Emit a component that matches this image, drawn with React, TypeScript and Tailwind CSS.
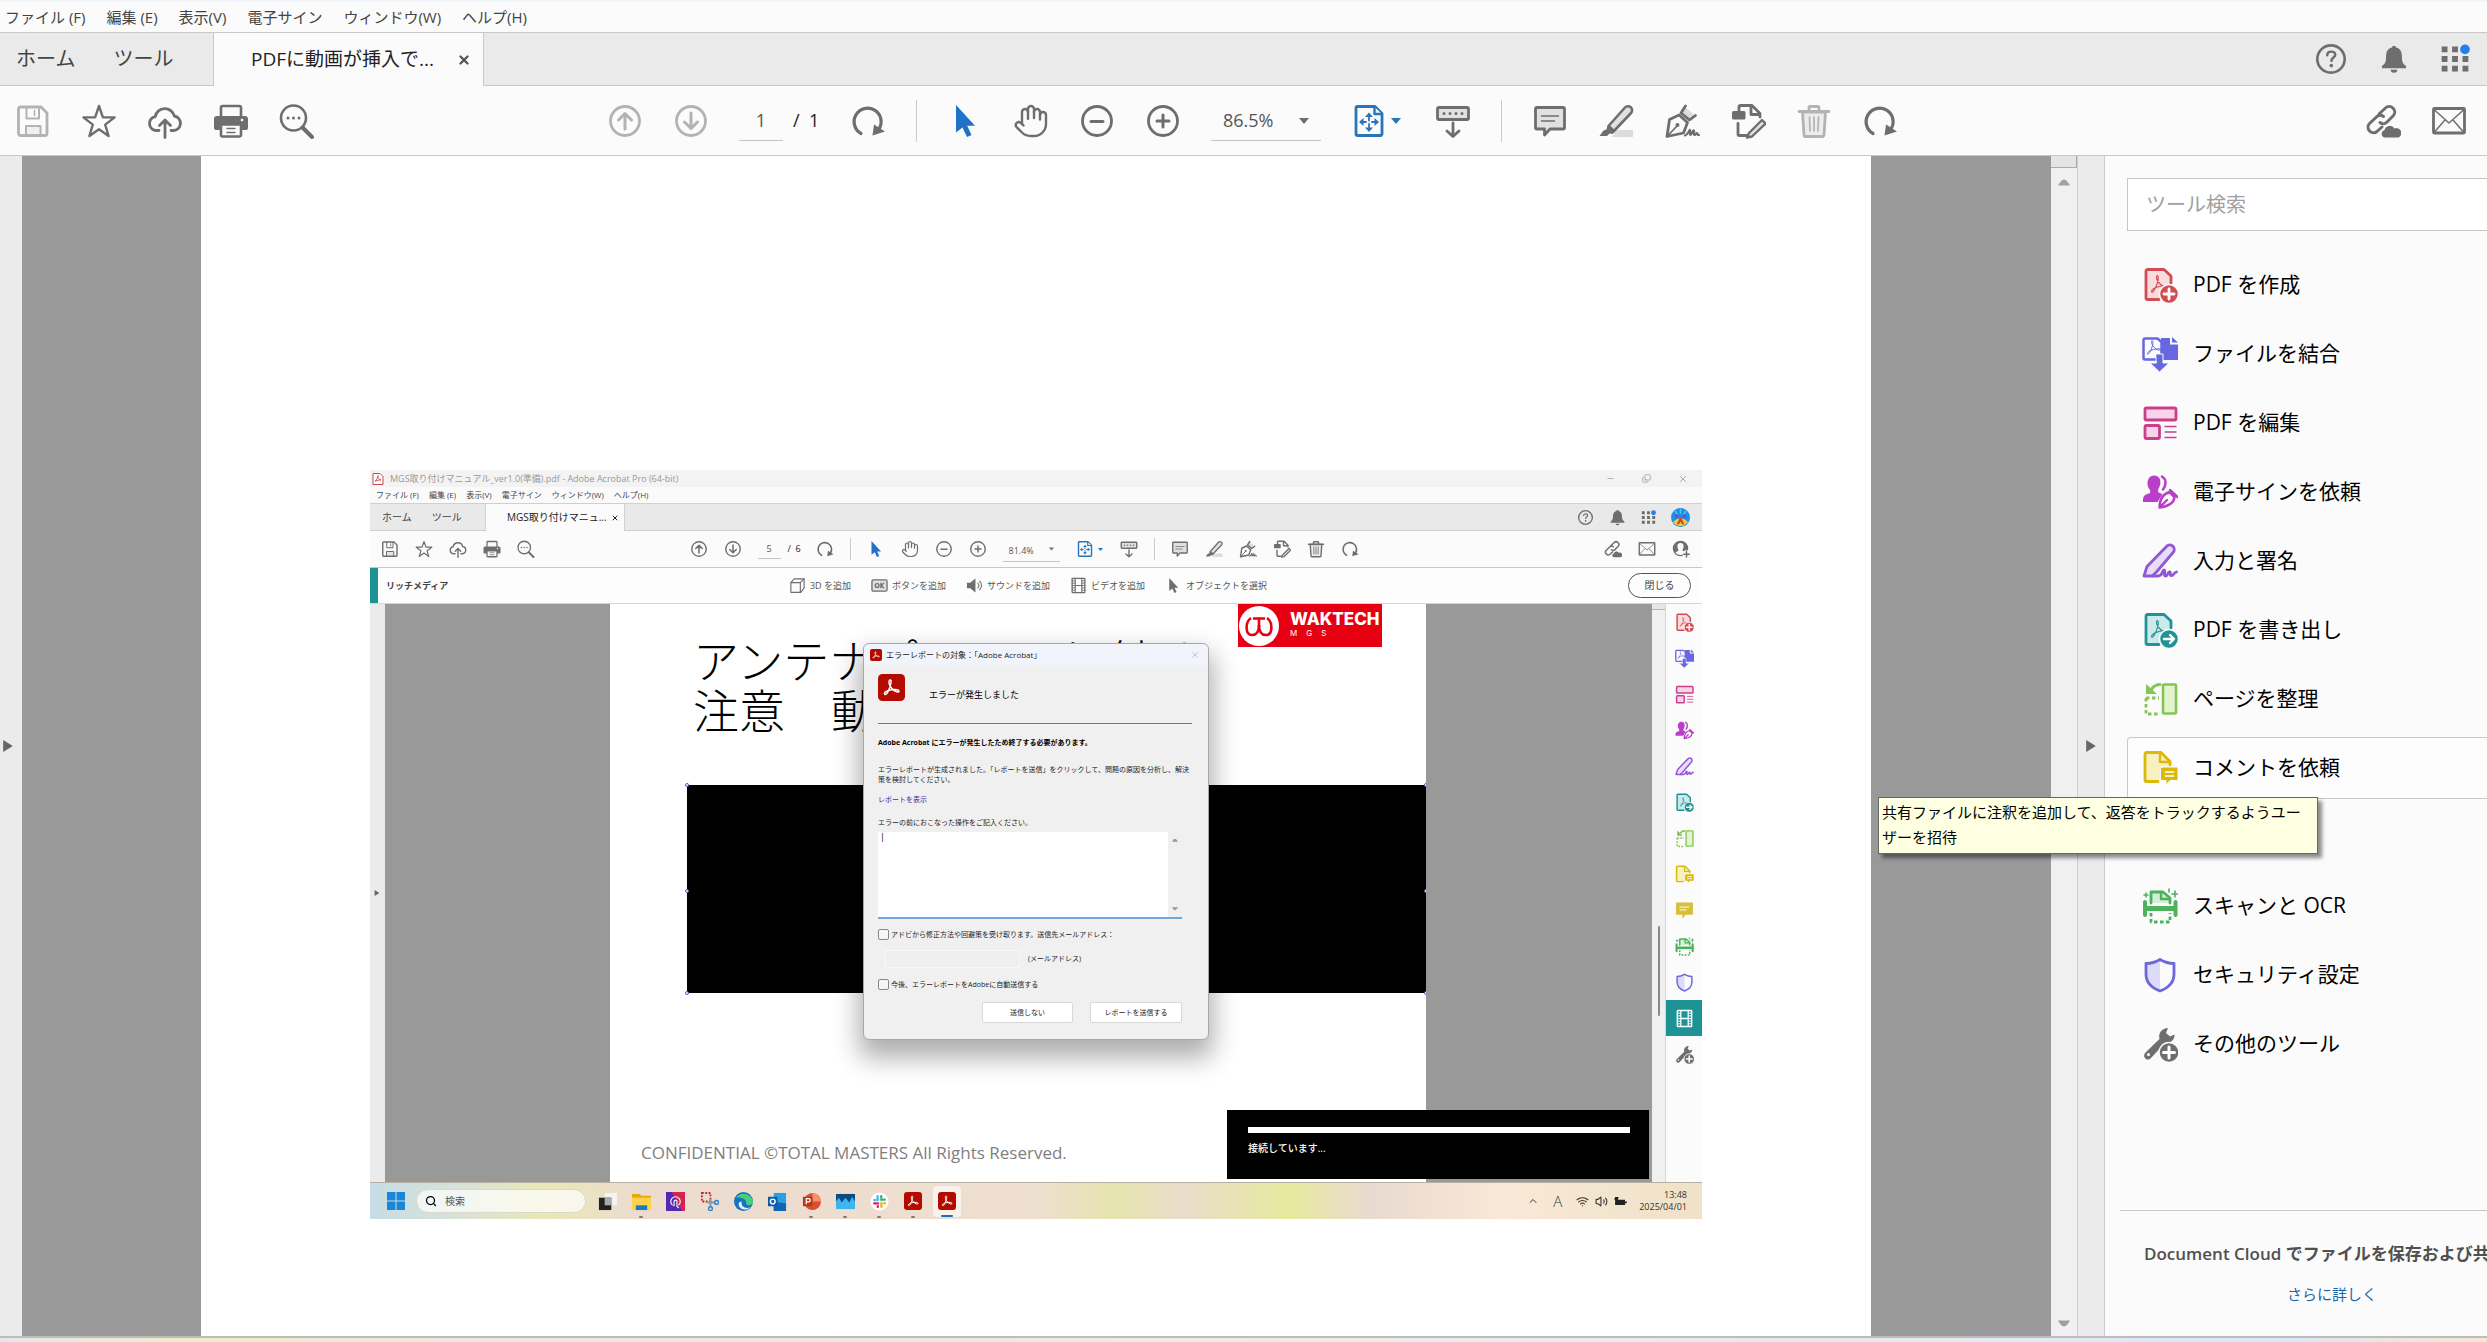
import React, { FC, ReactNode } from 'react';
import { Hand, Wifi, Volume2, ChevronUp, X, Minus, Copy, Search } from 'lucide-react';

const acrobatMark = (
  <path
    d="M12 28c-3 1-5 4-4 5s4-3 6-9 2-9 1-10-2 1-1 4 5 8 9 9 5 0 4-1-6-1-15 2z"
    strokeWidth="1.4"
  />
);

const redoShape = (
  <>
    <path d="M11 30.5A13.5 13.5 0 1 1 29 26" strokeWidth="3.2" />
    <path d="M22.500 32.500L24 21.500L35 28.500Z" fill="currentColor" stroke="none" />
  </>
);

const icons: Record<string, ReactNode> = {
  save: (
    <>
      <path d="M5.500 4H26l6 6v20.500a2 2 0 0 1-2 2H5.500a2 2 0 0 1-2-2V6a2 2 0 0 1 2-2z" />
      <path d="M11.500 4.500V15.500H24V5" strokeWidth="2" />
      <path d="M19.500 7.500v5" strokeWidth="1.600" />
      <path d="M11 32v-9h14.500v9" fill="currentColor" fillOpacity=".15" strokeWidth="2" />
    </>
  ),
  star: <path d="M18 3l3.800 11.200 11.800.2-9.400 7.200 3.400 11.400-9.600-6.800-9.600 6.800 3.400-11.400-9.400-7.200 11.800-.2z" strokeWidth="2.400" />,
  cloudUp: (
    <>
      <path d="M12 27.500H9.500a7 7 0 0 1-1.200-13.900 9.700 9.700 0 0 1 19-.6 7.300 7.300 0 0 1-.8 14.500H24" strokeWidth="2.800" />
      <path d="M18 34.500V18M12.500 22.500l5.500-5.500 5.500 5.500" strokeWidth="2.800" />
    </>
  ),
  print: (
    <>
      <path d="M8 13V4.500A1.500 1.500 0 0 1 9.500 3h17A1.500 1.500 0 0 1 28 4.500V13" strokeWidth="2.600" />
      <path d="M4 13h28a3 3 0 0 1 3 3v9a2 2 0 0 1-2 2H3a2 2 0 0 1-2-2v-9a3 3 0 0 1 3-3z" fill="currentColor" stroke="none" />
      <path d="M8 21.500h20V32a1.500 1.500 0 0 1-1.500 1.500h-17A1.500 1.500 0 0 1 8 32z" fill="#fbfbfb" strokeWidth="2.600" />
      <path d="M14 25.500h8M14 29.500h8" strokeWidth="1.400" />
      <circle cx="29" cy="17" r="1.300" fill="#fff" stroke="none" />
    </>
  ),
  find: (
    <>
      <circle cx="14.500" cy="15" r="12.500" strokeWidth="2.600" />
      <path d="M23.500 24.500l9.500 9.500" strokeWidth="4" />
      <path d="M9 15h.01M14.500 15h.01M20 15h.01" strokeWidth="3" />
    </>
  ),
  up: (
    <>
      <circle cx="18" cy="18" r="14.500" />
      <path d="M18 26V11.500M11.500 17L18 10.500l6.500 6.500" strokeWidth="3" />
    </>
  ),
  down: (
    <>
      <circle cx="18" cy="18" r="14.500" />
      <path d="M18 10v14.500M11.500 19l6.500 6.500 6.500-6.500" strokeWidth="3" />
    </>
  ),
  redo: redoShape,
  cursor: <path d="M9 2v27.500l6.500-5L20 34l4.500-2-4.300-9.200H28z" fill="currentColor" stroke="none" />,
  minus: (
    <>
      <circle cx="18" cy="18" r="14.500" />
      <path d="M12 18.500h12" strokeWidth="3" />
    </>
  ),
  plus: (
    <>
      <circle cx="18" cy="18" r="14.500" />
      <path d="M12 18h12M18 12v12" strokeWidth="3" />
    </>
  ),
  fit: (
    <>
      <path d="M6.500 3.500H24l7 7V31a1.500 1.500 0 0 1-1.500 1.500h-23A1.500 1.500 0 0 1 5 31V5a1.500 1.500 0 0 1 1.500-1.500z" />
      <path d="M23.500 4v7H31" fill="#fbfbfb" strokeWidth="2.400" />
      <path d="M18 14v3.500M18 21v3.500M11 19h4M21 19h4" strokeWidth="1.800" />
      <path d="M18 9.500l4 4.500h-8zM18 29l4-4.500h-8zM8 19l4.500-4v8zM28 19l-4.500-4v8z" fill="currentColor" stroke="none" />
    </>
  ),
  keyboard: (
    <>
      <rect x="2.500" y="4.500" width="31" height="12" rx="1.500" fill="#e1e1e1" />
      <path d="M9 10.500h.01M15 10.500h.01M21 10.500h.01M27 10.500h.01" strokeWidth="3" />
      <path d="M18 20v13M12 28l6 5.500 6-5.500" />
    </>
  ),
  comment: (
    <>
      <path d="M5 4.500h26A1.500 1.500 0 0 1 32.500 6v18.500A1.500 1.500 0 0 1 31 26H18l-5.500 6v-6H5a1.500 1.500 0 0 1-1.500-1.500V6A1.500 1.500 0 0 1 5 4.500z" fill="#e1e1e1" />
      <path d="M9.500 13h17M9.500 18h13" strokeWidth="1.500" />
    </>
  ),
  marker: (
    <>
      <path d="M14 34l5-7h16v7z" fill="#dcdcdc" stroke="none" />
      <path d="M10.500 23L27 4.500a3.500 3.500 0 0 1 6 5.500L16 28z" fill="#e1e1e1" strokeWidth="2.600" />
      <path d="M9.500 22.500l8 6-3 2.500-3-.5-2.500 2.500H1.500l4-5.500 3-1z" fill="currentColor" stroke="none" />
    </>
  ),
  sign: (
    <>
      <path d="M15 12l8.500 7.500-4 10.500L3 33.500l2.500-17z" />
      <path d="M4 32.500l8.500-9" strokeWidth="1.800" />
      <circle cx="13.500" cy="22" r="2" fill="currentColor" stroke="none" />
      <path d="M21 4l9.500 8-4.500 5-8.500-7z" fill="#dcdcdc" stroke="none" />
      <path d="M21.500 3l-4.500 7 8.500 7 6-4.500" />
      <path d="M21 32.500c3-1 3.500-4.500 5-5.500 1 1-1 5 .5 5s1.500-4 3-4.500-.5 4.500 1 4.500 1.500-2 2.500-2 0 2.500 2 2" strokeWidth="2.200" />
    </>
  ),
  edit: (
    <>
      <path d="M9 8V4a1.500 1.500 0 0 1 1.500-1.500H22l8 8V14M21 3v8.500h9" />
      <rect x="2" y="8" width="13.500" height="8.500" rx="1.500" fill="currentColor" stroke="none" />
      <path d="M8 20.500v10.500a1.500 1.500 0 0 0 1.500 1.500H16" />
      <path d="M19 30L32 17l3.500 3.500-13.500 13-5 1z" fill="#e1e1e1" strokeWidth="2.400" />
    </>
  ),
  trash: (
    <>
      <path d="M3 8.500h30M13 8V5a1.500 1.500 0 0 1 1.500-1.500h7A1.500 1.500 0 0 1 23 5v3" />
      <path d="M6.500 9l1.500 23a1.500 1.500 0 0 0 1.500 1.500h17A1.500 1.500 0 0 0 28 32l1.500-23z" fill="#ececec" />
      <path d="M13.500 14l.5 14M18 14v14M22.500 14l-.5 14" strokeWidth="1.700" />
    </>
  ),
  link: (
    <>
      <path d="M14 11l6.500-6a5.500 5.500 0 0 1 8 7.500L22 19a5 5 0 0 1-7 .5" strokeWidth="3" />
      <path d="M18.500 13.500a5 5 0 0 0-6.500 0l-7.500 7a5.500 5.500 0 0 0 7.500 8l5-4.500" strokeWidth="3" />
      <path d="M19 34.500a4 4 0 0 1 .5-7.500 5.500 5.500 0 0 1 10-1.500 4.700 4.700 0 0 1 4 9z" fill="currentColor" stroke="none" />
    </>
  ),
  mail: (
    <>
      <rect x="2.500" y="5.500" width="31" height="24.500" rx="1" />
      <path d="M3.500 7L18 20 32.500 7M3.500 29l10-11.500M32.500 29l-10-11.500" strokeWidth="1.500" />
    </>
  ),
  help: (
    <>
      <circle cx="18" cy="18" r="14.500" />
      <path d="M14 14c0-5 8.500-5 8.500-.5 0 3-4 3-4 6.500" strokeWidth="2.600" />
      <circle cx="18.300" cy="25" r="1.900" fill="currentColor" stroke="none" />
    </>
  ),
  bell: (
    <path
      d="M18 2a2.500 2.500 0 0 1 2.500 2.200C26 5.500 27.500 10 27.500 15c0 7 1.500 9 5 11.500V29h-29v-2.500c3.500-2.500 5-4.500 5-11.500 0-5 1.500-9.500 7-10.800A2.500 2.500 0 0 1 18 2zM14 31h8a4 3.500 0 0 1-8 0z"
      fill="currentColor"
      stroke="none"
    />
  ),
  apps: (
    <>
      <path
        d="M2 3h7v7H2zM14.500 3h7v7h-7zM2 14.500h7v7H2zM14.500 14.500h7v7h-7zM27 14.500h7v7h-7zM2 26h7v7H2zM14.500 26h7v7h-7zM27 26h7v7h-7z"
        fill="currentColor"
        stroke="none"
      />
      <circle cx="30" cy="6.500" r="5.800" fill="#2680eb" stroke="none" />
    </>
  ),
  userAdd: (
    <>
      <circle cx="17" cy="17" r="15.500" fill="currentColor" stroke="none" />
      <path d="M17 6c5 0 7 4 6 8.500-.5 3-2 4.500-2 6.500 1 2 5 2 6 4-3 3.500-6 5-10 5s-7-1.500-10-5c1-2 5-2 6-4 0-2-1.500-3.500-2-6.500C10 10 12 6 17 6z" fill="#fbfbfb" stroke="none" />
      <circle cx="29" cy="28" r="7.500" fill="#fbfbfb" stroke="none" />
      <path d="M23.500 28.500h11M29 23v11" strokeWidth="3" />
    </>
  ),
  cube: (
    <>
      <path d="M4 12l7-8h21v19l-7 9.500H4z" strokeWidth="2.400" />
      <path d="M4 12h20v20M24 12l8-8" strokeWidth="2.400" />
    </>
  ),
  ok: (
    <>
      <rect x="2" y="6" width="32" height="24" rx="3" fill="#e1e1e1" />
      <circle cx="13" cy="18" r="4" />
      <path d="M21 13v10M27 13l-5 5 5 5" />
    </>
  ),
  sound: (
    <>
      <path d="M2 12h7l11-9v30L9 24H2z" fill="currentColor" stroke="none" />
      <path d="M25 13c3 2 3 8 0 10M29 9c5 4 5 14 0 18" strokeWidth="2.200" />
    </>
  ),
  film: (
    <>
      <rect x="4.500" y="3" width="27" height="30" rx="1" />
      <path d="M11 3v30M25 3v30M11 18h14" strokeWidth="2.400" />
      <path d="M5 8h5M5 13h5M5 18h5M5 23h5M5 28h5M26 8h5M26 13h5M26 18h5M26 23h5M26 28h5" strokeWidth="1.800" />
    </>
  ),
  createPdf: (
    <>
      <path d="M17 32.500H5.500A1.500 1.500 0 0 1 4 31V4a1.500 1.500 0 0 1 1.500-1.500H22l7 6.500v7" fill="#fadcdc" />
      <g transform="translate(3 -3) scale(.85)">{acrobatMark}</g>
      <circle cx="27" cy="27" r="9.500" fill="currentColor" stroke="#fbfbfb" strokeWidth="1.500" />
      <path d="M22 27h10M27 22v10" stroke="#fff" />
    </>
  ),
  combine: (
    <>
      <path d="M19 2h9v6.500h8V24H19z" fill="currentColor" stroke="none" />
      <path d="M30 1l6 5.500h-6z" fill="currentColor" stroke="none" />
      <path d="M3 2.500h12.500l4 3.500v17.500H3A1.500 1.500 0 0 1 1.500 22V4A1.500 1.500 0 0 1 3 2.500z" fill="#fbfbfb" strokeWidth="2.500" />
      <g transform="translate(0 -5) scale(.7)">{acrobatMark}</g>
      <path d="M14 18h7v9h6l-9.500 9L8 27h6z" fill="currentColor" stroke="#fbfbfb" strokeWidth="1" />
    </>
  ),
  editPdf: (
    <>
      <rect x="3" y="3" width="31" height="12" rx="1.500" fill="#f8d4e8" />
      <rect x="3" y="20.500" width="14.500" height="13" rx="1.500" fill="#f8d4e8" />
      <path d="M22.500 21.500h12M22.500 27h12M22.500 32.500h12" strokeWidth="1.600" strokeLinecap="butt" />
    </>
  ),
  requestSign: (
    <>
      <path d="M12 1.500c5 0 7 4 6.300 8.500-.4 3-2.300 4.500-2.300 7 0 2 3 2 4.500 3l-5 8H1c0-6 1-7 6-8.500 2-.7 1.500-3 .3-4.500C4 11 5 1.500 12 1.500z" fill="currentColor" stroke="none" />
      <path d="M20 2.500c5 3 4 9 1 13" strokeWidth="2.600" />
      <path d="M17.500 33.500c0-7 2-13 10-15.500l5 5.500c-1 6.500-7 9-15 10zM18 33l7-7M28 16l7.500 7" strokeWidth="2.400" />
    </>
  ),
  fillSign: (
    <>
      <path d="M2 33l3-9.500L24 4a4 4 0 0 1 7.500 5L14 29.500 10 33z" fill="#e9dcfb" />
      <path d="M10 33h6c5 0 4-6 6-6s-1 6 1.500 6 2-4 4-4-.5 3.500 2 3.500 1.500-2.500 5-3.500" strokeWidth="2.800" />
    </>
  ),
  exportPdf: (
    <>
      <path d="M17 32.500H5.500A1.500 1.500 0 0 1 4 31V4a1.500 1.500 0 0 1 1.500-1.500H22l7 6.500v7" fill="#cdeaea" />
      <g transform="translate(3 -3) scale(.85)">{acrobatMark}</g>
      <circle cx="27" cy="27" r="9.500" fill="currentColor" stroke="#fbfbfb" strokeWidth="1.500" />
      <path d="M22 27h9M28 23l4 4-4 4" stroke="#fff" strokeWidth="2.400" />
    </>
  ),
  organize: (
    <>
      <rect x="21" y="3.500" width="13" height="29" rx="1" fill="#e2f3cf" strokeWidth="2.600" />
      <path d="M4 17h13M4 17v16h13" strokeDasharray="3.500 2.500" strokeLinecap="butt" />
      <path d="M18 3.500c-4 0-6 1.500-8 4" strokeWidth="3" />
      <path d="M4 3v10h11z" fill="currentColor" stroke="none" />
    </>
  ),
  requestComment: (
    <>
      <path d="M16 31.500H4.500A1.500 1.500 0 0 1 3 30V4a1.500 1.500 0 0 1 1.500-1.500H19l9 9V15" fill="#f9f0c0" />
      <path d="M18 3v9h10" strokeWidth="2.400" />
      <path d="M20 17h14.500A1.500 1.500 0 0 1 36 18.500v10.500a1.500 1.500 0 0 1-1.500 1.500H28l-4 4.500v-4.500h-4a1.500 1.500 0 0 1-1.500-1.500V18.500A1.500 1.500 0 0 1 20 17z" fill="currentColor" stroke="#fbfbfb" strokeWidth="1" />
      <path d="M23.500 22h8M23.500 26h8" stroke="#fff" strokeWidth="1.600" />
    </>
  ),
  note: (
    <>
      <path d="M3.500 3h29A1.500 1.500 0 0 1 34 4.500v20a1.500 1.500 0 0 1-1.500 1.500H20l-6 7.500V26H3.500A1.500 1.500 0 0 1 2 24.500v-20A1.500 1.500 0 0 1 3.500 3z" fill="currentColor" stroke="none" />
      <path d="M9 11.500h17M9 17h12" stroke="#fff" strokeWidth="1.800" />
    </>
  ),
  scan: (
    <>
      <path d="M9 15V4h12l7 6v5" fill="#d3efd7" />
      <path d="M19 4v7h8" strokeWidth="2.400" />
      <path d="M3 14v13M33.500 14v13" strokeWidth="4" />
      <path d="M2 18h33v5H2z" fill="currentColor" stroke="none" />
      <path d="M9 25v9h19v-9" strokeDasharray="3.500 2.500" strokeLinecap="butt" />
      <path d="M33 3v6M30 6h6M4 5v4M2 7h4M27 1v3" strokeWidth="1.600" />
    </>
  ),
  shield: (
    <>
      <path d="M18 3v31C8 29 4 24 4 17V7c6 0 9-1 14-4z" fill="#dddafa" stroke="none" />
      <path d="M18 2.500c5 3 8.500 4 14 4V17c0 8-4.500 13.500-14 17C8.500 30.500 4 25 4 17V6.500c5.500 0 9-1 14-4z" />
    </>
  ),
  wrench: (
    <>
      <path d="M17.500 13c-1.500-6 2.500-11 8.500-11l-2 5 4 3.500 4.500-2c.5 5.500-5 9.500-9.500 8.500L9 32c-3.500 4-9-.5-6-5z" fill="currentColor" stroke="none" />
      <circle cx="6.500" cy="28.500" r="1.500" fill="#fff" stroke="none" />
      <circle cx="27" cy="26.500" r="10" fill="currentColor" stroke="#fbfbfb" strokeWidth="1.500" />
      <path d="M21.500 26.500h11M27 21v11" stroke="#fff" strokeWidth="3" />
    </>
  ),
};

type IconProps = { name: string; className?: string };

const Icon: FC<IconProps> = ({ name, className = 'size-9' }) => (
  <svg
    viewBox="0 0 36 36"
    className={`shrink-0 ${className}`}
    fill="none"
    stroke="currentColor"
    strokeWidth="2.8"
    strokeLinejoin="round"
    strokeLinecap="round"
    aria-hidden="true"
  >
    {icons[name]}
  </svg>
);

const Caret: FC<{ className?: string; d?: string }> = ({ className = '', d = 'M0 2h10L5 8z' }) => (
  <svg viewBox="0 0 10 10" className={`shrink-0 ${className}`} fill="currentColor" aria-hidden="true">
    <path d={d} />
  </svg>
);

const UP = 'M0 8h10C9 6 6.500 3 5 3S1 6 0 8z';
const DOWN = 'M0 2h10C9 4 6.500 7 5 7S1 4 0 2z';
const RIGHT = 'M1 0l8 5-8 5z';

const menuItems = ['ファイル (F)', '編集 (E)', '表示(V)', '電子サイン', 'ウィンドウ(W)', 'ヘルプ(H)'];

const tools = [
  { icon: 'createPdf', label: 'PDF を作成', color: 'text-[#d34b53]' },
  { icon: 'combine', label: 'ファイルを結合', color: 'text-[#6767e4]' },
  { icon: 'editPdf', label: 'PDF を編集', color: 'text-[#cb3e8c]' },
  { icon: 'requestSign', label: '電子サインを依頼', color: 'text-[#b93fc9]' },
  { icon: 'fillSign', label: '入力と署名', color: 'text-[#9158d4]' },
  { icon: 'exportPdf', label: 'PDF を書き出し', color: 'text-[#219296]' },
  { icon: 'organize', label: 'ページを整理', color: 'text-[#86c552]' },
  { icon: 'requestComment', label: 'コメントを依頼', color: 'text-[#dbb90c]' },
  { icon: '', label: '', color: '' },
  { icon: 'scan', label: 'スキャンと OCR', color: 'text-[#4cb25e]' },
  { icon: 'shield', label: 'セキュリティ設定', color: 'text-[#6b68dc]' },
  { icon: 'wrench', label: 'その他のツール', color: 'text-[#6e6e6e]' },
];

const railIcons = [
  ...tools.slice(0, 8),
  { icon: 'note', label: '注釈', color: 'text-[#d8be3a]' },
  ...tools.slice(9, 11),
  { icon: 'film', label: 'リッチメディア', color: 'text-white' },
  tools[11],
];

const sizes = {
  large: {
    bar: 'h-[70px]',
    slot: 'w-[66px]',
    icon: 'size-9',
    left: '',
    middle: 'pl-[18px]',
    right: 'pr-[5px]',
    dim: 'text-[#b3b3b3]',
    nav: 'text-[#b3b3b3]',
    input: 'ml-[15px] w-11 h-[41px] text-[18px]',
    total: 'w-[52px] pl-[10px] text-[18px]',
    divider: 'mx-[15px] h-[42px]',
    select: 'ml-[15px] w-[110px]',
    selectText: 'h-[41px] pl-3 text-[18px]',
    selectCaret: 'right-3 size-[10px]',
    fit: 'w-[99px] pl-[30px] gap-1',
    caret: 'size-[10px]',
  },
  small: {
    bar: 'h-[37px]',
    slot: 'w-[34px]',
    icon: 'size-[18px]',
    left: 'pl-[3px]',
    middle: 'pr-6',
    right: 'pr-1',
    dim: 'text-[#6e6e6e]',
    nav: 'text-[#6e6e6e]',
    input: 'ml-2 w-[23px] h-5 text-[9px]',
    total: 'w-[27px] pl-[7px] text-[9px]',
    divider: 'mx-2 h-[22px]',
    select: 'ml-2 w-[57px]',
    selectText: 'h-5 pl-[6px] text-[9px]',
    selectCaret: 'right-[6px] size-[5px]',
    fit: 'w-[52px] pl-4 gap-1',
    caret: 'size-[5px]',
  },
};

type ToolbarProps = {
  size: 'large' | 'small';
  page: string;
  pages: string;
  zoom: string;
};

const Toolbar: FC<ToolbarProps> = ({ size, page, pages, zoom }) => {
  const s = sizes[size];
  const tool = (name: string, color = '') => (
    <button key={name} type="button" aria-label={name} className={`flex justify-center ${s.slot} ${color}`}>
      {name === 'hand' ? <Hand className={s.icon} strokeWidth={1.6} /> : <Icon name={name} className={s.icon} />}
    </button>
  );

  return (
    <div className={`grid grid-cols-[1fr_auto_1fr] items-center border-b border-[#c8c8c8] bg-[#fbfbfb] text-[#6e6e6e] ${s.bar}`}>
      <div className={`flex ${s.left}`}>
        {tool('save', s.dim)}
        {['star', 'cloudUp', 'print', 'find'].map((name) => tool(name))}
      </div>
      <div className={`flex items-center ${s.middle}`}>
        {tool('up', s.nav)}
        {tool('down', s.nav)}
        <input
          type="text"
          aria-label="page"
          defaultValue={page}
          className={`border-b border-[#c4c4c4] bg-transparent text-center text-[#555] outline-none ${s.input}`}
        />
        <span className={`whitespace-pre text-[#222] ${s.total}`}>{`/  ${pages}`}</span>
        {tool('redo')}
        <div className={`w-px bg-[#cacaca] ${s.divider}`} />
        {tool('cursor', 'text-[#1f72c6]')}
        {tool('hand')}
        {tool('minus')}
        {tool('plus')}
        <div className={`relative ${s.select}`}>
          <select
            aria-label="zoom"
            className={`w-full appearance-none border-b border-[#c4c4c4] bg-transparent text-[#555] outline-none ${s.selectText}`}
          >
            <option>{zoom}</option>
          </select>
          <Caret className={`pointer-events-none absolute top-1/2 -translate-y-1/2 ${s.selectCaret}`} />
        </div>
        <button type="button" aria-label="fit" className={`flex items-center text-[#2a74ba] ${s.fit}`}>
          <Icon name="fit" className={s.icon} />
          <Caret className={s.caret} />
        </button>
        {tool('keyboard')}
        <div className={`w-px bg-[#cacaca] ${s.divider}`} />
        {['comment', 'marker', 'sign', 'edit'].map((name) => tool(name))}
        {tool('trash', s.dim)}
        {tool('redo')}
      </div>
      <div className={`flex justify-end ${s.right}`}>
        {tool('link')}
        {tool('mail')}
        {size === 'small' && tool('userAdd')}
      </div>
    </div>
  );
};

const AcrobatLogo: FC<{ className?: string }> = ({ className = '' }) => (
  <svg viewBox="0 0 36 36" className={`shrink-0 ${className}`} fill="none" aria-hidden="true">
    <rect width="36" height="36" rx="6" fill="#b30b00" />
    <path
      d="M9 27c-2-2 3-5 9-6s10 0 10 2-5 1-9-3-5-9-4-11 3-1 2.500 2S13 29 9 27z"
      stroke="#fff"
      strokeWidth="2"
    />
  </svg>
);

const ErrorDialog = () => (
  <div
    role="dialog"
    aria-label="エラーレポート"
    className="absolute left-[493px] top-[173px] h-[397px] w-[346px] rounded-md border border-[#a8a8a8] bg-[#f0f0f0] text-[7px] leading-[10px] text-[#222] shadow-[0_14px_26px_4px_rgba(0,0,0,0.32)]"
  >
    <div className="flex h-[21px] items-center gap-1 rounded-t-md bg-[#f2f4fc] pl-[6px] pr-2 text-[8px]">
      <AcrobatLogo className="size-3" />
      <span className="flex-1">エラーレポートの対象：「Adobe Acrobat」</span>
      <X className="size-[10px] text-[#bbb]" strokeWidth={2} />
    </div>
    <div className="pl-[14px] pr-4">
      <div className="mt-[9px] flex gap-6 text-[9px]">
        <AcrobatLogo className="size-[27px]" />
        <span className="pt-4 text-black">エラーが発生しました</span>
      </div>
      <hr className="mt-[22px] border-[#777]" />
      <p className="mt-[14px] font-bold text-black">Adobe Acrobat にエラーが発生したため終了する必要があります。</p>
      <p className="mt-[17px] whitespace-nowrap">
        エラーレポートが生成されました。「レポートを送信」をクリックして、問題の原因を分析し、解決
        <br />
        策を検討してください。
      </p>
      <a href="#report" className="mt-[10px] block text-[#33309a]">
        レポートを表示
      </a>
      <label htmlFor="steps" className="mt-[13px] block">
        エラーの前におこなった操作をご記入ください。
      </label>
      <div className="mt-1 flex h-[87px] w-[304px] border-b-2 border-[#6fa8d6] bg-white">
        <textarea id="steps" defaultValue="|" className="flex-1 resize-none bg-transparent px-[2px] text-[9px] text-black outline-none" />
        <div className="flex w-[14px] flex-col items-center justify-between bg-[#f0f0f0] py-[5px] text-[#999]">
          <Caret className="size-[6px]" d={UP} />
          <Caret className="size-[6px]" d={DOWN} />
        </div>
      </div>
      <label className="mt-[10px] flex items-center gap-[2px] whitespace-nowrap">
        <input type="checkbox" className="size-[11px] appearance-none rounded-xs border border-[#888] bg-[#f6f6f6]" />
        アドビから修正方法や回避策を受け取ります。送信先メールアドレス：
      </label>
      <label className="mt-[10px] flex items-center gap-2 pl-[7px]">
        <input type="text" className="h-[18px] w-[135px] border border-[#f8f8f8] bg-[#efefef] outline-none" />
        (メールアドレス)
      </label>
      <label className="mt-[11px] flex items-center gap-[2px]">
        <input type="checkbox" className="size-[11px] appearance-none rounded-xs border border-[#888] bg-[#f6f6f6]" />
        今後、エラーレポートをAdobeに自動送信する
      </label>
      <div className="mt-3 flex justify-end gap-[17px] pr-[10px]">
        <button type="button" className="h-[21px] w-[91px] rounded-xs border border-[#d8d8d8] bg-white">
          送信しない
        </button>
        <button type="button" className="h-[21px] w-[92px] rounded-xs border border-[#d8d8d8] bg-white">
          レポートを送信する
        </button>
      </div>
    </div>
  </div>
);

const richMediaTools = [
  { icon: 'cube', label: '3D を追加' },
  { icon: 'ok', label: 'ボタンを追加' },
  { icon: 'sound', label: 'サウンドを追加' },
  { icon: 'film', label: 'ビデオを追加' },
  { icon: 'cursor', label: 'オブジェクトを選択' },
];

const handles = [
  '-left-[2px] -top-[2px]',
  '-right-[2px] -top-[2px]',
  '-left-[2px] top-1/2',
  '-right-[2px] top-1/2',
  '-bottom-[2px] -left-[2px]',
  '-bottom-[2px] -right-[2px]',
];

const Slide = () => (
  <div className="relative min-w-0 flex-1 overflow-hidden bg-white">
    <div className="absolute right-11 top-0 flex h-[43px] w-36 items-center bg-[#e60012] text-white">
      <svg viewBox="0 0 40 40" className="ml-px size-10 shrink-0" fill="none" stroke="#e60012" strokeWidth="2.6">
        <circle cx="20" cy="20" r="20" fill="#fff" stroke="none" />
        <path d="M12 12c-6 4-6 17 1 17 5 0 7-4 7-10 0 6 2 10 7 10 7 0 7-13 1-17" />
        <path d="M14 12.500h12M20 13v8" />
      </svg>
      <div className="ml-[11px] font-[Inter] leading-[14px]">
        <div className="text-[17px] font-extrabold">WAKTECH</div>
        <div className="whitespace-pre text-[8px]">M    G    S</div>
      </div>
    </div>
    <h2 className="pl-[83px] pt-[31px] text-[46px] font-light leading-[50px] text-black">
      アンテナポール取り付け
      <br />
      注意　動画
    </h2>
    <div className="relative ml-[77px] mt-[50px] h-52 bg-black">
      {handles.map((position) => (
        <span key={position} className={`absolute size-1 rounded-full border border-[#5a55b8] bg-white ${position}`} />
      ))}
    </div>
    <p className="mt-[148px] pl-[31px] text-[17px] leading-6 text-[#808080]">
      CONFIDENTIAL ©TOTAL MASTERS All Rights Reserved.
    </p>
  </div>
);

const taskbarApps: { id: string; state?: 'open' | 'active'; art: ReactNode }[] = [
  {
    id: 'taskview',
    art: (
      <>
        <path d="M7 1h13v13H7z" fill="#f4f4f4" />
        <path d="M1 6h13v13H1z" fill="#222" />
        <path d="M7 6h7v8H7z" fill="#aaa" />
      </>
    ),
  },
  {
    id: 'explorer',
    state: 'open',
    art: (
      <>
        <path d="M0 2h8l2 2h10v15H0z" fill="#e8a812" />
        <path d="M0 6h20v13H0z" fill="#ffd24c" />
        <path d="M4 14h12v5H4z" fill="#1b7ac4" />
      </>
    ),
  },
  {
    id: 'vpn',
    art: (
      <>
        <path d="M0 0h20v20H0z" fill="#5228b4" />
        <path d="M6 0h14v20h-3z" fill="#d22455" />
        <path d="M7 14a5 5 0 1 1 6 0M8.500 15v-5a1.500 1.500 0 0 1 3 0v5l2 2" fill="none" stroke="#fff" strokeWidth="1.200" />
      </>
    ),
  },
  {
    id: 'snip',
    art: (
      <>
        <path d="M2 1h9v9H2z" fill="none" stroke="#c02a2a" strokeWidth="2" strokeDasharray="2 1.500" />
        <path d="M11 7v9M8 11h8" stroke="#8a98a5" strokeWidth="2" />
        <circle cx="11" cy="17.500" r="2" fill="none" stroke="#2c84cc" strokeWidth="1.500" />
        <circle cx="17.500" cy="11" r="2" fill="none" stroke="#2c84cc" strokeWidth="1.500" />
      </>
    ),
  },
  {
    id: 'edge',
    art: (
      <>
        <circle cx="10" cy="10" r="10" fill="#1572c4" />
        <path d="M2 6a10 10 0 0 1 18 4c0 4-6 5-7 3 1-5-5-8-11-7z" fill="#48cf7c" />
        <path d="M8 10c-1 6 5 8 9 6-3 4-11 3-12-2-.5-3 1-4 3-4z" fill="#e6f3fb" />
      </>
    ),
  },
  {
    id: 'outlook',
    art: (
      <>
        <path d="M6 1h13v18H6z" fill="#28a0e4" />
        <path d="M6 10l13 2v8H6z" fill="#1066b4" />
        <path d="M0 5h10v10H0z" fill="#0a5ca8" />
        <circle cx="5" cy="10" r="2.500" fill="none" stroke="#fff" strokeWidth="1.500" />
      </>
    ),
  },
  {
    id: 'powerpoint',
    state: 'open',
    art: (
      <>
        <circle cx="11" cy="10" r="9" fill="#d8502c" />
        <path d="M11 1a9 9 0 0 1 9 9h-9z" fill="#f4906c" />
        <path d="M1 5h10v10H1z" fill="#b8381a" />
        <path d="M4.500 13V7h2.500a1.500 1.500 0 0 1 0 3.500H4.500" fill="none" stroke="#fff" strokeWidth="1.300" />
      </>
    ),
  },
  {
    id: 'monitor',
    state: 'open',
    art: (
      <>
        <path d="M0 2h20v16H0z" fill="#3fb4ee" />
        <path d="M0 2h20v8l-3-5-3 6-4-5-4 5-3-5-3 4z" fill="#0b4c80" />
      </>
    ),
  },
  {
    id: 'slack',
    state: 'open',
    art: (
      <>
        <circle cx="10" cy="10" r="9.500" fill="#fff" />
        <g strokeWidth="2.500" strokeLinecap="round">
          <path d="M8 4.500v4M4.500 8.500h1" stroke="#36c5f0" />
          <path d="M11.500 8h4M11.800 4.500v1" stroke="#2eb67d" />
          <path d="M12 11.500v4M15 11.800h.5" stroke="#ecb22e" />
          <path d="M4.500 12h4M8.200 15v.5" stroke="#e01e5a" />
        </g>
      </>
    ),
  },
  { id: 'acrobat', state: 'open', art: null },
  { id: 'acrobat-report', state: 'active', art: null },
];

const Taskbar = () => (
  <div className="flex h-[37px] items-center border-t border-[#b9aea4] bg-[linear-gradient(90deg,#c6dde4_0%,#d9e2d6_7%,#e9e8b6_13%,#ecdccf_20%,#eedfd0_50%,#e5e4ae_56%,#e9dccb_61%,#e6ea9e_69%,#e9dad0_75%,#f9e8d6_85%,#efe2c8_100%)] pl-[17px] pr-[15px] text-[#333]">
    <svg viewBox="0 0 18 18" className="size-[18px]" fill="#1a86d9" aria-hidden="true">
      <path d="M0 0h8.500v8.500H0zM9.500 0H18v8.500H9.500zM0 9.500h8.500V18H0zM9.500 9.500H18V18H9.500z" />
    </svg>
    <label className="ml-[11px] flex h-6 w-[170px] items-center gap-2 rounded-full border border-[#ddd8cc] bg-white/70 px-2">
      <Search className="size-3 shrink-0 text-black" strokeWidth={2.5} />
      <input type="text" placeholder="検索" className="w-full bg-transparent text-[10px] outline-none placeholder:text-[#555]" />
    </label>
    <div className="ml-1 flex items-center">
      {taskbarApps.map((app) => (
        <div key={app.id} className="flex w-[34px] justify-center">
          <div
            className={`relative flex h-[31px] w-7 items-center justify-center rounded ${app.state === 'active' ? 'bg-white/60' : ''}`}
          >
            {app.art ? (
              <svg viewBox="0 0 20 20" className="size-[19px]" aria-hidden="true">
                {app.art}
              </svg>
            ) : (
              <AcrobatLogo className="size-[18px]" />
            )}
            {app.state === 'open' && <span className="absolute -bottom-px h-[2px] w-1 rounded-full bg-[#857a72]" />}
            {app.state === 'active' && <span className="absolute bottom-0 h-[2px] w-3 rounded-full bg-[#1d6fb5]" />}
          </div>
        </div>
      ))}
    </div>
    <div className="ml-auto flex items-center gap-[6px]">
      <ChevronUp className="size-3" />
      <span className="px-2 text-[15px] font-light">A</span>
      <Wifi className="size-[13px]" />
      <Volume2 className="size-[13px]" />
      <svg viewBox="0 0 14 10" className="h-[9px] w-[13px]" fill="#222" aria-hidden="true">
        <path d="M1 3h11v6H1zM12 5h2v2h-2zM1 0h4l-1 3H0z" />
      </svg>
      <div className="pl-[6px] text-right text-[9px] leading-[12px]">
        13:48
        <br />
        2025/04/01
      </div>
    </div>
  </div>
);

// Acrobat window pasted into the PDF page
const EmbeddedWindow = () => (
  <section className="relative">
    <div className="flex h-[17px] items-center gap-[6px] bg-[#f3f3f3] px-[2px] text-[9px] text-[#999]">
      <svg viewBox="0 0 12 12" className="size-3" fill="#fff" stroke="#c9494c" aria-hidden="true">
        <path d="M1 .5h7l3 3v8H1z" />
        <path d="M3 8c2 0 6-2 6-1s-4-2-3-4S4 9 3 8z" fill="none" />
      </svg>
      <span className="flex-1">MGS取り付けマニュアル_ver1.0(準備).pdf - Adobe Acrobat Pro (64-bit)</span>
      <div className="flex gap-[27px] pr-3">
        <Minus className="size-[9px]" />
        <Copy className="size-[9px] -scale-x-100 rotate-180" />
        <X className="size-[10px]" />
      </div>
    </div>
    <nav className="flex h-4 items-center gap-[10px] bg-[#fafafa] pl-[6px] text-[8px] text-[#444]">
      {menuItems.map((item) => (
        <span key={item}>{item}</span>
      ))}
    </nav>
    <div className="flex h-7 border-t border-[#d0d0d0] bg-[#e9e9e9] text-[10px] text-[#444]">
      <div className="flex w-[115px] items-center gap-5 border-b border-[#d0d0d0] pl-3">
        <span>ホーム</span>
        <span>ツール</span>
      </div>
      <div className="flex w-[140px] items-center justify-between border-x border-[#d0d0d0] bg-[#fbfbfb] pl-[21px] pr-[5px] text-[#222]">
        <span>MGS取り付けマニュ...</span>
        <X className="size-2" strokeWidth={3} />
      </div>
      <div className="flex flex-1 items-center justify-end gap-[15px] border-b border-[#d0d0d0] pr-3 text-[#6e6e6e]">
        <Icon name="help" className="size-[17px]" />
        <Icon name="bell" className="size-[17px]" />
        <Icon name="apps" className="size-[15px]" />
        <svg viewBox="0 0 20 20" className="size-[19px]" aria-hidden="true">
          <circle cx="10" cy="10" r="10" fill="#1c8fe6" />
          <path d="M2 15c3-3 5-4 8-4s5 1 8 4a10 10 0 0 1-16 0z" fill="#f6c83a" />
          <path d="M10 9l4 8h-2.500L10 14l-1.500 3H6z" fill="#e03a2a" />
          <path d="M4 3l3 4M10 1v5M16 3l-3 4" stroke="#44d0f4" strokeWidth="1.500" />
          <circle cx="6" cy="8.500" r="2" fill="#7a48c0" />
          <circle cx="14" cy="8.500" r="2" fill="#7a48c0" />
        </svg>
      </div>
    </div>
    <Toolbar size="small" page="5" pages="6" zoom="81.4%" />
    <div className="grid h-9 grid-cols-[1fr_auto_1fr] items-center border-b border-[#d6d6d6] bg-[#fdfdfd] text-[9px] text-[#444]">
      <div className="flex items-center gap-2 self-stretch font-bold">
        <span className="w-2 self-stretch bg-[#1d9396]" />
        リッチメディア
      </div>
      <div className="flex gap-5 pr-4">
        {richMediaTools.map((item) => (
          <button key={item.icon} type="button" className="flex items-center gap-1 text-[#555]">
            <Icon name={item.icon} className="size-[17px] text-[#6e6e6e]" />
            {item.label}
          </button>
        ))}
      </div>
      <div className="flex justify-end pr-[11px]">
        <button type="button" className="h-[25px] w-[63px] rounded-full border border-[#555] text-[10px]">
          閉じる
        </button>
      </div>
    </div>
    <div className="flex h-[578px] bg-[#999]">
      <div className="flex w-[15px] items-center bg-[#ebebeb] pl-1 text-[#666]">
        <Caret className="size-[6px]" d={RIGHT} />
      </div>
      <div className="flex flex-1 pl-[225px] pr-[226px]">
        <Slide />
      </div>
      <div className="w-[14px] border-r border-[#d4d4d4] bg-[#f0f0f0]">
        <div className="h-[6px] border-b border-[#b5b5b5] bg-[#e6e6e6]" />
        <div className="mx-auto mt-[316px] h-[90px] w-[2px] rounded-full bg-[#888]" />
      </div>
      <ul className="w-9 bg-[#fbfbfb]">
        {railIcons.map((item) => (
          <li key={item.icon} className={item.icon === 'film' ? 'bg-[#1d9396]' : ''}>
            <button type="button" aria-label={item.label} className={`flex h-9 w-full items-center justify-center ${item.color}`}>
              <Icon name={item.icon} className="size-[19px]" />
            </button>
          </li>
        ))}
      </ul>
    </div>
    <Taskbar />
    <ErrorDialog />
    <div className="absolute bottom-10 right-[53px] h-[69px] w-[422px] bg-black pl-[21px] pr-[19px] pt-[17px] text-[10px] font-medium text-white">
      <div className="h-[6px] bg-white" />
      <p className="mt-2 leading-[14px]">接続しています...</p>
    </div>
  </section>
);

const ToolsPanel = () => (
  <aside className="flex w-[382px] shrink-0 flex-col bg-[#fbfbfb]">
    <input
      type="text"
      aria-label="ツール検索"
      placeholder="ツール検索"
      className="ml-[22px] mt-[22px] h-[53px] border border-r-0 border-[#c6c6c6] bg-white pl-[18px] text-[20px] outline-none placeholder:text-[#a0a0a0]"
    />
    <ul className="mt-[23px] flex flex-col gap-[7px] pl-[22px]">
      {tools.map((item) => {
        const hovered = item.icon === 'requestComment';
        return (
          <li
            key={item.icon}
            className={`relative flex h-[62px] items-center rounded-l border border-r-0 ${hovered ? 'border-[#c8c8c8] bg-[#fdfdfd]' : 'border-transparent'}`}
          >
            {item.icon && (
              <button type="button" className="flex items-center gap-[15px] pl-[14px] text-[21px] text-black">
                <Icon name={item.icon} className={`size-9 ${item.color}`} />
                {item.label}
              </button>
            )}
            {hovered && (
              <div
                role="tooltip"
                className="absolute -left-[250px] top-[59px] z-10 h-[57px] w-[440px] border border-[#666] bg-[#ffffe1] px-[3px] py-[2px] text-[15px] leading-[25px] text-black shadow-[4px_4px_4px_rgba(0,0,0,0.45)]"
              >
                共有ファイルに注釈を追加して、返答をトラックするようユー
                <br />
                ザーを招待
              </div>
            )}
          </li>
        );
      })}
    </ul>
    <div className="mb-[28px] ml-[15px] mt-auto overflow-hidden whitespace-nowrap border-t border-[#c8c8c8] pl-6 pt-[29px]">
      <p className="text-[17px] font-semibold leading-7 text-[#505050]">Document Cloud でファイルを保存および共有</p>
      <a href="#more" className="ml-[143px] mt-3 block text-[15px] leading-7 text-[#1c66ae]">
        さらに詳しく
      </a>
    </div>
  </aside>
);

const App: FC = () => (
  <div className="flex h-screen flex-col overflow-hidden bg-[#fbfbfb] font-['Open_Sans','Noto_Sans_CJK_JP',sans-serif] text-[#444]">
    <nav className="flex h-8 shrink-0 items-center gap-[21px] border-t-2 border-[#eff3fa] pl-[5px] text-[15px]">
      {menuItems.map((item) => (
        <span key={item}>{item}</span>
      ))}
    </nav>
    <div className="flex h-[54px] shrink-0 border-t border-[#c8c8c8] bg-[#eaeaea] text-[20px]">
      <div className="flex w-[213px] items-center gap-[38px] border-b border-[#c8c8c8] pl-4">
        <button type="button">ホーム</button>
        <button type="button">ツール</button>
      </div>
      <div className="flex w-[271px] items-center justify-between border-x border-[#c8c8c8] bg-[#fbfbfb] pl-[37px] pr-3 text-[19px] text-[#222]">
        <span>PDFに動画が挿入で...</span>
        <button type="button" aria-label="閉じる">
          <X className="size-[14px] text-[#555]" strokeWidth={4} />
        </button>
      </div>
      <div className="flex flex-1 items-center justify-end gap-[31px] border-b border-[#c8c8c8] pr-[17px] text-[#6e6e6e]">
        <Icon name="help" className="size-[34px]" />
        <Icon name="bell" className="size-[30px]" />
        <Icon name="apps" className="size-[30px]" />
      </div>
    </div>
    <Toolbar size="large" page="1" pages="1" zoom="86.5%" />
    <main className="flex min-h-0 flex-1">
      <div className="flex w-[22px] shrink-0 items-center bg-[#ebebeb] pl-[2px] text-[#666]">
        <Caret className="h-[14px] w-[12px]" d={RIGHT} />
      </div>
      <div className="flex min-w-0 flex-1 bg-[#999] pl-[179px] pr-[180px]">
        <div className="min-w-0 flex-1 bg-white px-[169px] pt-[314px]">
          <EmbeddedWindow />
        </div>
      </div>
      <div className="flex w-[27px] shrink-0 flex-col items-center border-r border-[#cdcdcd] bg-[#f0f0f0] text-[#a0a0a0]">
        <div className="h-3 w-full border-b border-r border-[#aaa] bg-[#e4e4e4]" />
        <Caret className="mt-2 size-3" d={UP} />
        <Caret className="mb-[6px] mt-auto size-3" d={DOWN} />
      </div>
      <div className="flex w-[27px] shrink-0 items-center justify-center border-r border-[#cdcdcd] bg-[#ebebeb] text-[#666]">
        <Caret className="h-[14px] w-[12px]" d={RIGHT} />
      </div>
      <ToolsPanel />
    </main>
    <div className="h-[6px] shrink-0 border-t-2 border-[#bdbdbd] bg-[linear-gradient(90deg,#e4e8ea,#f0ecc8_8%,#efe6e0_20%,#ececec_60%,#dce8f6_92%,#f6e6d2)]" />
  </div>
);

export default App;
